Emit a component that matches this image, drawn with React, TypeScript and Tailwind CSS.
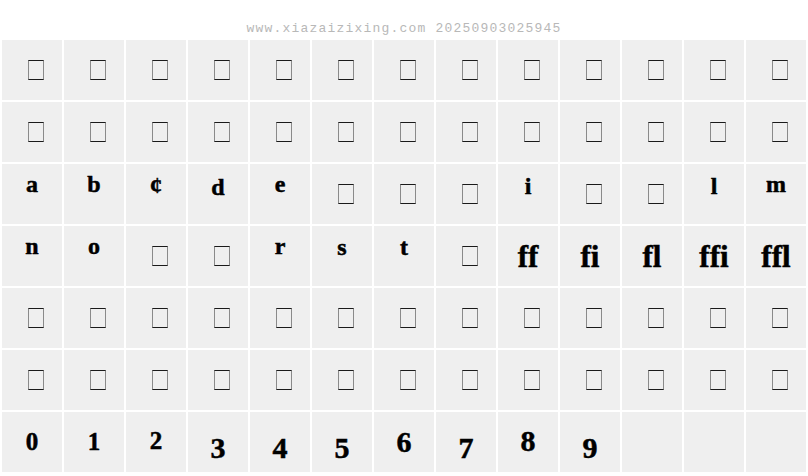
type Cell = { ch?: string; cls?: string; box?: boolean };

const box: Cell = { box: true };
const boxes = (n: number): Cell[] => Array.from({ length: n }, () => box);

// letters sit near the top of their cells, each on its own baseline
const L = "text-[24px]";
const LIG = "text-[31px] mt-[15px]";

const rows: Cell[][] = [
  boxes(13),
  boxes(13),
  [
    { ch: "a", cls: `${L} mt-[8px]` },
    { ch: "b", cls: `${L} mt-[8px]` },
    { ch: "¢", cls: `${L} mt-[9px]` },
    { ch: "d", cls: `${L} mt-[11px]` },
    { ch: "e", cls: `${L} mt-[8px]` },
    box,
    box,
    box,
    { ch: "i", cls: `${L} mt-[10px]` },
    box,
    box,
    { ch: "l", cls: `${L} mt-[10px]` },
    { ch: "m", cls: `${L} mt-[8px]` },
  ],
  [
    { ch: "n", cls: `${L} mt-[8px]` },
    { ch: "o", cls: `${L} mt-[8px]` },
    box,
    box,
    { ch: "r", cls: `${L} mt-[8px]` },
    { ch: "s", cls: `${L} mt-[9px]` },
    { ch: "t", cls: `${L} mt-[9px]` },
    box,
    { ch: "ff", cls: LIG },
    { ch: "fi", cls: LIG },
    { ch: "fl", cls: LIG },
    { ch: "ffi", cls: LIG },
    { ch: "ffl", cls: LIG },
  ],
  boxes(13),
  boxes(13),
  [
    { ch: "0", cls: "text-[25px] mt-[17px]" },
    { ch: "1", cls: "text-[25px] mt-[17px]" },
    { ch: "2", cls: "text-[25px] mt-[16px]" },
    { ch: "3", cls: "text-[30px] mt-[21px]" },
    { ch: "4", cls: "text-[30px] mt-[21px]" },
    { ch: "5", cls: "text-[30px] mt-[21px]" },
    { ch: "6", cls: "text-[30px] mt-[15px]" },
    { ch: "7", cls: "text-[30px] mt-[21px]" },
    { ch: "8", cls: "text-[30px] mt-[14px]" },
    { ch: "9", cls: "text-[30px] mt-[21px]" },
    {},
    {},
    {},
  ],
];

function GlyphCell({ cell }: { cell: Cell }) {
  return (
    <div className="h-[60px] w-[60px] bg-[#efefef]">
      {cell.box && (
        <div className="ml-[26px] mt-[20px] h-[20px] w-[16px] border-x border-y border-x-[#8a8a8a] border-y-[#1a1a1a]" />
      )}
      {cell.ch && (
        <div className={`block text-center font-['Liberation_Serif',serif] font-bold leading-none text-black [-webkit-text-stroke:0.5px_black] ${cell.cls}`}>
          {cell.ch}
        </div>
      )}
    </div>
  );
}

export default function App() {
  return (
    <div className="h-[476px] w-[808px] bg-white">
      <div className="h-[38px] pt-[22px] text-center font-['Liberation_Mono',monospace] text-[13px] leading-none tracking-[1.2px] text-[#b8b8b8]">
        www.xiazaizixing.com 20250903025945
      </div>
      <div className="grid grid-cols-[repeat(13,60px)] gap-[2px] px-[2px] pt-[2px]">
        {rows.map((row, r) =>
          row.map((cell, c) => <GlyphCell key={`${r}-${c}`} cell={cell} />)
        )}
      </div>
    </div>
  );
}
